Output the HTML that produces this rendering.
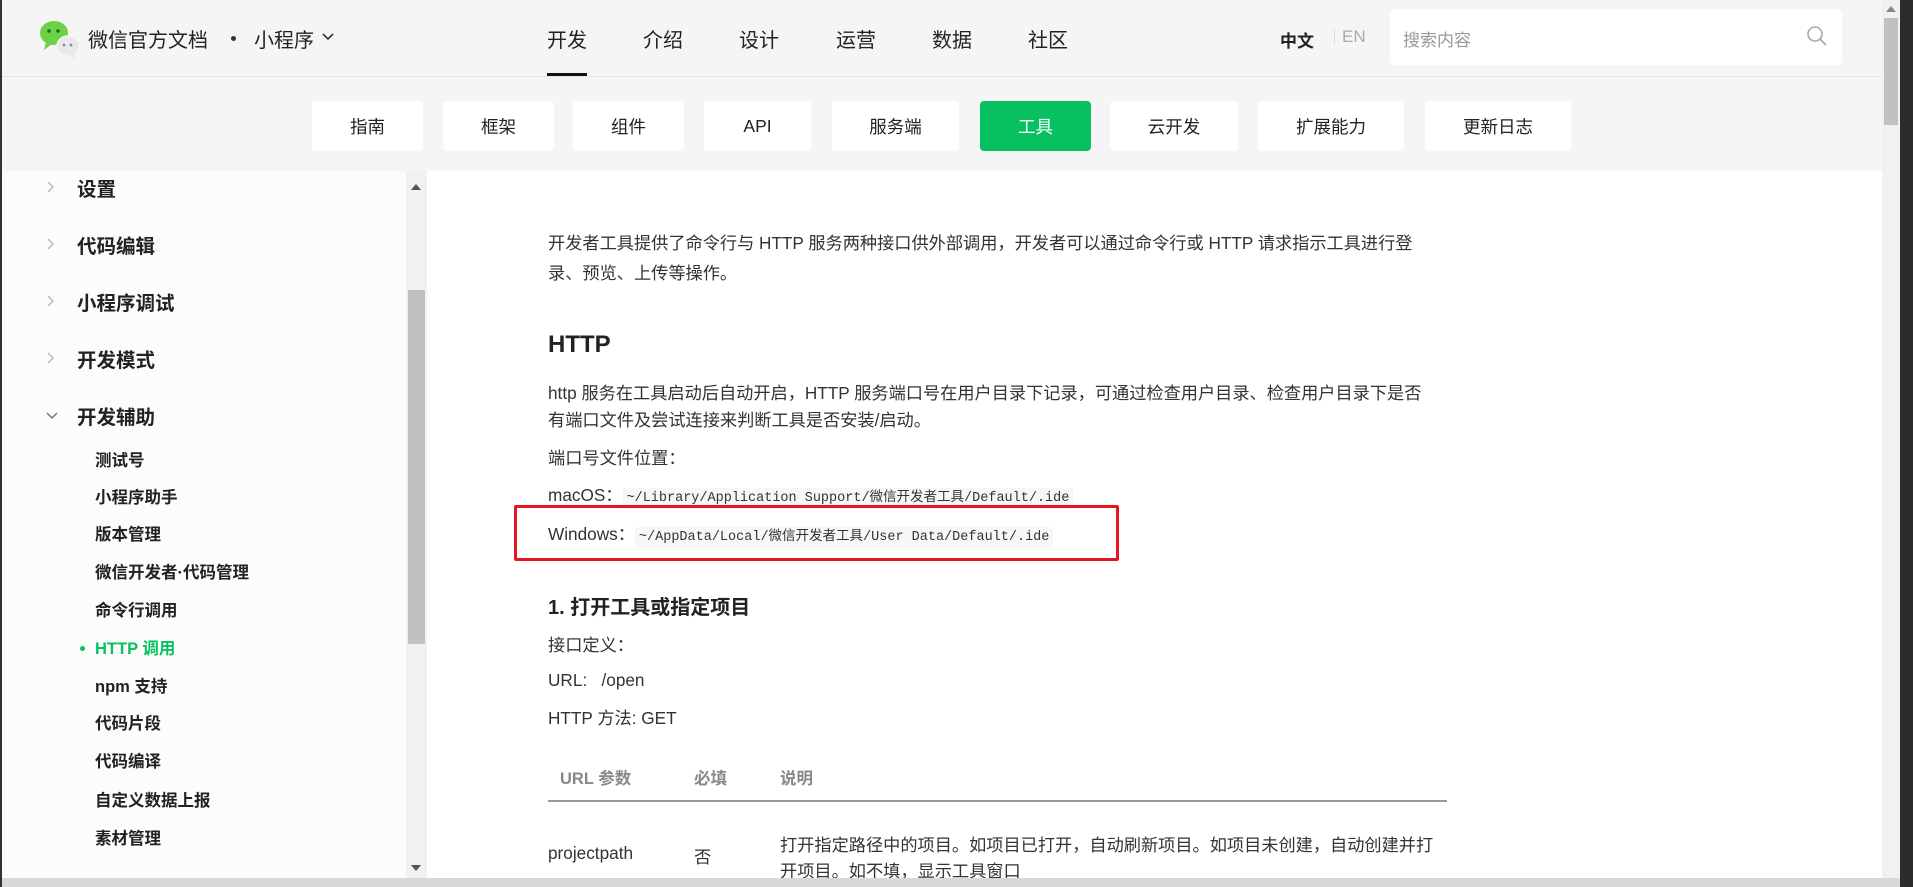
<!DOCTYPE html>
<html><head><meta charset="utf-8"><style>
*{margin:0;padding:0;box-sizing:border-box}
body{width:1913px;height:887px;overflow:hidden;background:#f5f5f5;font-family:"Liberation Sans","Noto Sans CJK SC",sans-serif;color:#222;position:relative}
.a{position:absolute;white-space:nowrap}
.nav{font-size:20px;top:24px;color:#222}
.tab{position:absolute;top:101px;height:50px;background:#fff;border-radius:4px;font-size:17.5px;display:flex;align-items:center;justify-content:center;color:#222}
.sb{font-size:19.5px;font-weight:bold;left:77px;color:#222}
.si{font-size:16.5px;font-weight:bold;left:95px;color:#222}
.p{font-size:17.2px;color:#333;left:548px}
code{font-family:"Liberation Mono","Noto Sans CJK SC",monospace;font-size:13.5px;background:#f7f7f7;padding:3px 4px;color:#333}
</style></head><body>
<div class="a" style="left:0;top:0;width:2px;height:887px;background:#333"></div>
<div class="a" style="left:1900px;top:0;width:13px;height:887px;background:#2b2b2b"></div>
<div class="a" style="left:2px;top:76px;width:1880px;height:1px;background:#e5e5e5"></div>
<svg class="a" style="left:38px;top:20px" width="42" height="40" viewBox="0 0 42 40">
<ellipse cx="16" cy="13" rx="14" ry="12" fill="#6cd144"/><path d="M8 22 L6 30 L14 24Z" fill="#6cd144"/>
<circle cx="11" cy="11" r="1.8" fill="#1a6e1a"/><circle cx="20" cy="11" r="1.8" fill="#1a6e1a"/>
<ellipse cx="30" cy="26" rx="11" ry="10" fill="#e9e9ec" stroke="#f5f5f5" stroke-width="1.5"/><path d="M34 33 L38 39 L30 35Z" fill="#e9e9ec"/>
<circle cx="26" cy="25" r="1.4" fill="#888"/><circle cx="33" cy="25" r="1.4" fill="#888"/></svg>
<div class="a" style="left:88px;top:24px;font-size:20px;color:#222">微信官方文档</div>
<div class="a" style="left:231px;top:36px;width:5px;height:5px;border-radius:50%;background:#333"></div>
<div class="a" style="left:254px;top:24px;font-size:20px;color:#222">小程序</div>
<svg class="a" style="left:321px;top:32px" width="14" height="10"><path d="M2 2 L7 7 L12 2" stroke="#333" stroke-width="1.6" fill="none"/></svg>
<div class="a nav" style="left:547px">开发</div>
<div class="a" style="left:547px;top:73px;width:40px;height:3px;background:#111"></div>
<div class="a nav" style="left:643px">介绍</div>
<div class="a nav" style="left:739px">设计</div>
<div class="a nav" style="left:836px">运营</div>
<div class="a nav" style="left:932px">数据</div>
<div class="a nav" style="left:1028px">社区</div>
<div class="a" style="left:1280px;top:27px;font-size:17px;font-weight:bold">中文</div>
<div class="a" style="left:1334px;top:29px;width:1px;height:16px;background:#ddd"></div>
<div class="a" style="left:1342px;top:27px;font-size:17px;color:#aaa;line-height:20px">EN</div>
<div class="a" style="left:1390px;top:9px;width:452px;height:56px;background:#fff;border-radius:4px"></div>
<div class="a" style="left:1403px;top:26px;font-size:17px;color:#999">搜索内容</div>
<svg class="a" style="left:1806px;top:25px" width="22" height="22"><circle cx="9" cy="9" r="7" stroke="#aaa" stroke-width="1.6" fill="none"/><path d="M14 14 L20 20" stroke="#aaa" stroke-width="1.8"/></svg>
<div class="a" style="left:1882px;top:0;width:18px;height:887px;background:#f1f1f1"></div>
<div class="a" style="left:1884px;top:18px;width:14px;height:107px;background:#c1c1c1"></div>
<svg class="a" style="left:1885px;top:5px" width="12" height="8"><path d="M1 7 L6 1 L11 7Z" fill="#888"/></svg>
<div class="tab" style="left:312px;width:111px">指南</div>
<div class="tab" style="left:443px;width:111px">框架</div>
<div class="tab" style="left:573px;width:111px">组件</div>
<div class="tab" style="left:704px;width:107px">API</div>
<div class="tab" style="left:832px;width:127px">服务端</div>
<div class="tab" style="left:980px;width:111px;background:#07c160;color:#fff">工具</div>
<div class="tab" style="left:1110px;width:128px">云开发</div>
<div class="tab" style="left:1258px;width:146px">扩展能力</div>
<div class="tab" style="left:1425px;width:146px">更新日志</div>
<div class="a" style="left:2px;top:171px;width:404px;height:707px;background:#fcfcfc"></div>
<div class="a" style="left:406px;top:171px;width:21px;height:707px;background:#f1f1f1"></div>
<div class="a" style="left:408px;top:290px;width:17px;height:354px;background:#c1c1c1"></div>
<svg class="a" style="left:410px;top:183px" width="12" height="8"><path d="M1 7 L6 1 L11 7Z" fill="#555"/></svg>
<svg class="a" style="left:410px;top:864px" width="12" height="8"><path d="M1 1 L6 7 L11 1Z" fill="#555"/></svg>
<div class="a" style="left:427px;top:171px;width:1455px;height:707px;background:#fff"></div>
<svg class="a" style="left:46px;top:180px" width="10" height="14"><path d="M2 2 L7 7 L2 12" stroke="#bbb" stroke-width="1.5" fill="none"/></svg>
<div class="a sb" style="top:173px">设置</div>
<svg class="a" style="left:46px;top:237px" width="10" height="14"><path d="M2 2 L7 7 L2 12" stroke="#bbb" stroke-width="1.5" fill="none"/></svg>
<div class="a sb" style="top:230px">代码编辑</div>
<svg class="a" style="left:46px;top:294px" width="10" height="14"><path d="M2 2 L7 7 L2 12" stroke="#bbb" stroke-width="1.5" fill="none"/></svg>
<div class="a sb" style="top:287px">小程序调试</div>
<svg class="a" style="left:46px;top:351px" width="10" height="14"><path d="M2 2 L7 7 L2 12" stroke="#bbb" stroke-width="1.5" fill="none"/></svg>
<div class="a sb" style="top:344px">开发模式</div>
<svg class="a" style="left:45px;top:411px" width="14" height="10"><path d="M2 2 L7 7 L12 2" stroke="#777" stroke-width="1.5" fill="none"/></svg>
<div class="a sb" style="top:401px">开发辅助</div>
<div class="a si" style="top:447px">测试号</div>
<div class="a si" style="top:484px">小程序助手</div>
<div class="a si" style="top:521px">版本管理</div>
<div class="a si" style="top:559px">微信开发者·代码管理</div>
<div class="a si" style="top:597px">命令行调用</div>
<div class="a" style="left:80px;top:646px;width:5px;height:5px;border-radius:50%;background:#07c160"></div>
<div class="a si" style="top:635px;color:#07c160">HTTP 调用</div>
<div class="a si" style="top:673px">npm 支持</div>
<div class="a si" style="top:710px">代码片段</div>
<div class="a si" style="top:748px">代码编译</div>
<div class="a si" style="top:787px">自定义数据上报</div>
<div class="a si" style="top:825px">素材管理</div>
<div class="a p" style="top:229px">开发者工具提供了命令行与 HTTP 服务两种接口供外部调用，开发者可以通过命令行或 HTTP 请求指示工具进行登</div>
<div class="a p" style="top:259px">录、预览、上传等操作。</div>
<div class="a" style="left:548px;top:331px;font-size:24px;font-weight:bold;color:#222">HTTP</div>
<div class="a p" style="top:379px">http 服务在工具启动后自动开启，HTTP 服务端口号在用户目录下记录，可通过检查用户目录、检查用户目录下是否</div>
<div class="a p" style="top:406px">有端口文件及尝试连接来判断工具是否安装/启动。</div>
<div class="a p" style="top:444px">端口号文件位置：</div>
<div class="a p" style="top:481px">macOS：<code>~/Library/Application Support/微信开发者工具/Default/.ide</code></div>
<div class="a" style="left:514px;top:505px;width:605px;height:56px;border:3px solid #e5141e;border-radius:2px"></div>
<div class="a p" style="top:520px">Windows：<code>~/AppData/Local/微信开发者工具/User Data/Default/.ide</code></div>
<div class="a" style="left:548px;top:591px;font-size:20px;font-weight:bold;color:#222">1. 打开工具或指定项目</div>
<div class="a p" style="top:631px">接口定义：</div>
<div class="a p" style="top:670px">URL:&nbsp;&nbsp;&nbsp;/open</div>
<div class="a p" style="top:704px">HTTP 方法: GET</div>
<div class="a" style="left:560px;top:765px;font-size:16.5px;font-weight:bold;color:#888">URL 参数</div>
<div class="a" style="left:694px;top:765px;font-size:16.5px;font-weight:bold;color:#888">必填</div>
<div class="a" style="left:780px;top:765px;font-size:16.5px;font-weight:bold;color:#888">说明</div>
<div class="a" style="left:548px;top:800px;width:899px;height:2px;background:#999"></div>
<div class="a p" style="top:843px">projectpath</div>
<div class="a p" style="left:694px;top:843px">否</div>
<div class="a p" style="left:780px;top:831px">打开指定路径中的项目。如项目已打开，自动刷新项目。如项目未创建，自动创建并打</div>
<div class="a p" style="left:780px;top:857px">开项目。如不填，显示工具窗口</div>
<div class="a" style="left:2px;top:878px;width:1898px;height:9px;background:#d8d8d8"></div>
</body></html>
